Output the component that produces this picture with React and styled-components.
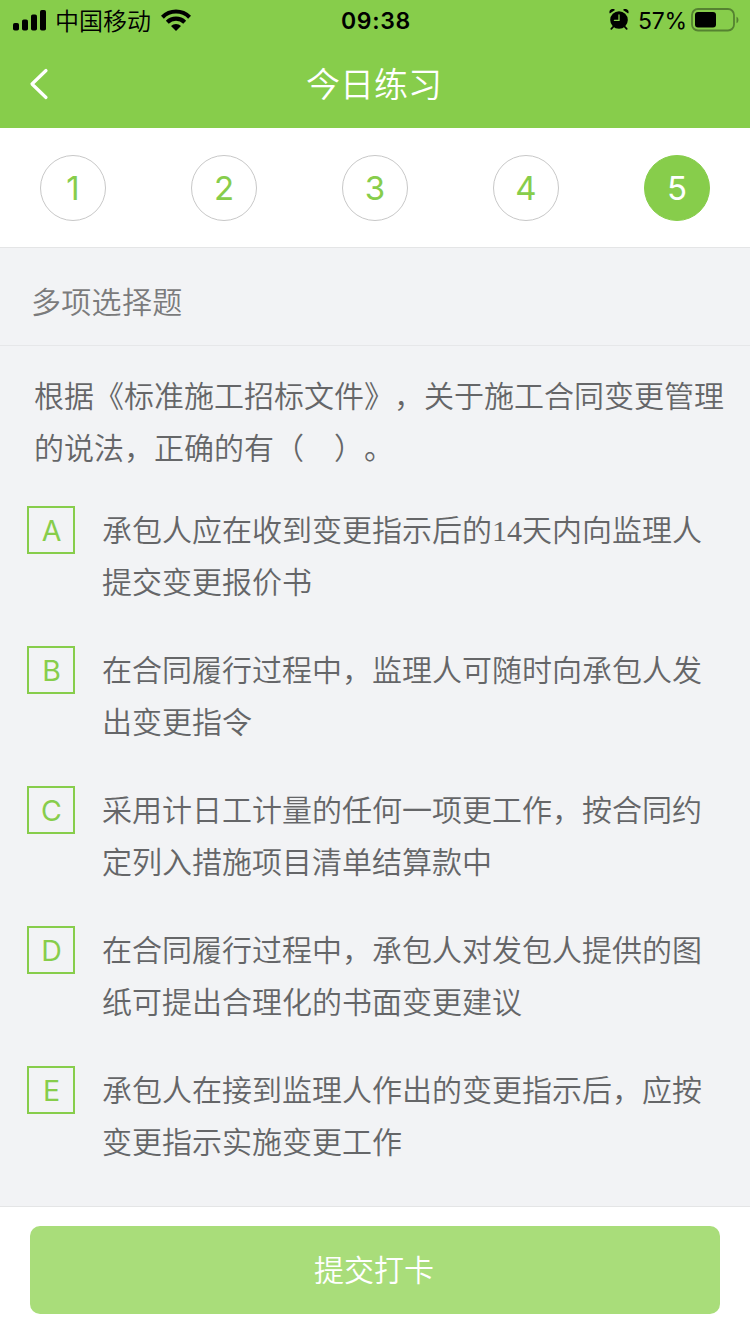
import React from 'react'
import styled, { createGlobalStyle } from 'styled-components'

const GlobalStyle = createGlobalStyle`
  * {
    box-sizing: border-box;
  }

  body {
    margin: 0;
    background: #ffffff;
  }
`;

const Screen = styled.div`
  width: 750px;
  height: 1334px;
  display: flex;
  flex-direction: column;
  overflow: hidden;
  background: #ffffff;
  font-family: Inter, 'Noto Sans CJK SC', sans-serif;
  font-weight: 350;
  text-spacing-trim: space-all;
`;

const Header = styled.header`
  height: 128px;
  flex: none;
  background: #87cd4b;
`;

const StatusBar = styled.div`
  height: 40px;
  display: grid;
  grid-template-columns: 1fr auto 1fr;
  align-items: center;
  padding: 0 11px 0 13px;
  color: #000000;
`;

const StatusGroup = styled.div`
  display: flex;
  align-items: center;
  justify-content: ${({ $end }) => ($end ? 'flex-end' : 'flex-start')};

  svg {
    display: block;
    flex: none;
  }
`;

const Carrier = styled.span`
  margin: 0 10px 0 8px;
  padding-top: 3px;
  font-size: 24px;
  line-height: 37px;
  font-weight: 350;
`;

const Time = styled.span`
  padding-top: 2px;
  font-size: 23px;
  line-height: 38px;
  font-weight: 600;
  letter-spacing: 0.7px;
`;

const Percent = styled.span`
  margin: 0 4px 0 9px;
  padding-top: 2px;
  font-size: 23px;
  line-height: 38px;
  font-weight: 400;
  letter-spacing: -0.2px;
`;

const NavBar = styled.div`
  height: 88px;
  display: grid;
  grid-template-columns: 100px 1fr 100px;
  align-items: center;
`;

const BackButton = styled.button`
  height: 88px;
  margin: 0;
  padding: 0 0 0 29px;
  display: flex;
  align-items: center;
  border: 0;
  background: none;
`;

const Title = styled.h1`
  margin: 0;
  padding: 1px 2px 0 0;
  font-size: 34px;
  line-height: 87px;
  font-weight: 350;
  text-align: center;
  color: #ffffff;
`;

const Steps = styled.nav`
  height: 120px;
  flex: none;
  display: flex;
  justify-content: space-between;
  padding: 27px 40px 0;
  border-bottom: 1px solid #e4e5e6;
`;

const Step = styled.div`
  width: 66px;
  height: 66px;
  display: flex;
  justify-content: center;
  align-items: center;
  border: 1px solid ${({ $active }) => ($active ? '#87cd4b' : '#c8c8c8')};
  border-radius: 50%;
  background: ${({ $active }) => ($active ? '#87cd4b' : '#ffffff')};
  color: ${({ $active }) => ($active ? '#ffffff' : '#87cd4b')};
  font-size: 33px;
  line-height: 64px;
  font-weight: 400;
`;

const Content = styled.main`
  flex: 1;
  background: #f2f3f5;
`;

const QuestionType = styled.h2`
  height: 98px;
  margin: 0;
  padding: 7px 31px 0;
  border-bottom: 1px solid #e6e7e9;
  font-size: 30px;
  line-height: 94px;
  font-weight: 350;
  letter-spacing: 0.3px;
  color: #7b7b7c;
`;

const Question = styled.p`
  margin: 0;
  padding: 24px 24px 0 34px;
  font-size: 30px;
  line-height: 52px;
  color: #656668;
`;

const Options = styled.div`
  display: flex;
  flex-direction: column;
  gap: 34px;
  padding: 32px 27px 0;
`;

const Option = styled.div`
  display: flex;
  align-items: flex-start;
  gap: 27px;
`;

const OptionKey = styled.span`
  width: 48px;
  height: 48px;
  flex: none;
  padding: 2px 0 0 1px;
  display: flex;
  justify-content: center;
  align-items: center;
  border: 2px solid #87cd4b;
  font-size: 28.5px;
  line-height: 42px;
  font-weight: 400;
  color: #87cd4b;
`;

const OptionText = styled.span`
  width: 602px;
  margin-top: -1px;
  padding-bottom: 3px;
  font-family: 'Liberation Serif', 'Noto Sans CJK SC', serif;
  font-size: 30px;
  line-height: 52px;
  color: #656668;
`;

const Footer = styled.footer`
  height: 128px;
  flex: none;
  padding: 19px 30px 0;
  border-top: 1px solid #e4e5e6;
  background: #ffffff;
`;

const SubmitButton = styled.button`
  width: 100%;
  height: 88px;
  margin: 0;
  padding: 1px 2px 0 0;
  display: block;
  border: 0;
  border-radius: 10px;
  background: #a9dd7a;
  font-family: inherit;
  font-size: 30px;
  line-height: 87px;
  font-weight: 350;
  color: #ffffff;
`;

const SignalIcon = () => (
  <svg width="34" height="22" viewBox="0 0 34 22">
    <rect x="0" y="14" width="6" height="7.5" rx="1.8" />
    <rect x="9" y="10.5" width="6" height="11" rx="1.8" />
    <rect x="18" y="5.5" width="6" height="16" rx="1.8" />
    <rect x="27" y="1" width="6" height="20.5" rx="1.8" />
  </svg>
)

const WifiIcon = () => (
  <svg width="30" height="22" viewBox="0 0 30 22">
    <g fill="none" stroke="#000000" strokeWidth="4.1">
      <path d="M1.4 8.2a19.2 19.2 0 0 1 27.2 0" />
      <path d="M6.3 13.2a12.3 12.3 0 0 1 17.4 0" />
    </g>
    <path d="M15 22l-5-5a7.1 7.1 0 0 1 10 0z" />
  </svg>
)

const AlarmIcon = () => (
  <svg width="20" height="22" viewBox="0 0 20 22">
    <circle cx="10" cy="11" r="8.8" />
    <path d="M.8 4.6A3.2 3.2 0 0 1 6 1zM19.2 4.6A3.2 3.2 0 0 0 14 1z" />
    <path d="M4.5 17.5l-2.2 2.4M15.5 17.5l2.2 2.4" stroke="#000000" strokeWidth="1.8" strokeLinecap="round" />
    <path d="M10 6v5.3H5.4" fill="none" stroke="#87cd4b" strokeWidth="1.3" strokeLinecap="round" />
  </svg>
)

const BatteryIcon = () => (
  <svg width="48" height="24" viewBox="0 0 48 24">
    <rect x="1" y="1" width="42" height="21.5" rx="6" fill="none" stroke="#558231" strokeWidth="1.8" />
    <rect x="4" y="4" width="21" height="15.5" rx="3" />
    <path d="M45.5 8.8c2.6 1 2.6 5.4 0 6.4z" fill="#558231" />
  </svg>
)

const BackIcon = () => (
  <svg width="20" height="32" viewBox="0 0 20 32">
    <path d="M17 2.5L3 16l14 13.5" fill="none" stroke="#ffffff" strokeWidth="3.2" strokeLinecap="round" strokeLinejoin="round" />
  </svg>
)

const steps = [1, 2, 3, 4, 5]

const options = [
  { key: 'A', text: '承包人应在收到变更指示后的14天内向监理人提交变更报价书' },
  { key: 'B', text: '在合同履行过程中，监理人可随时向承包人发出变更指令' },
  { key: 'C', text: '采用计日工计量的任何一项更工作，按合同约定列入措施项目清单结算款中' },
  { key: 'D', text: '在合同履行过程中，承包人对发包人提供的图纸可提出合理化的书面变更建议' },
  { key: 'E', text: '承包人在接到监理人作出的变更指示后，应按变更指示实施变更工作' },
]

const App = () => (
  <Screen lang="zh-CN">
    <GlobalStyle />
    <Header>
      <StatusBar>
        <StatusGroup>
          <SignalIcon />
          <Carrier>中国移动</Carrier>
          <WifiIcon />
        </StatusGroup>
        <Time>09:38</Time>
        <StatusGroup $end>
          <AlarmIcon />
          <Percent>57%</Percent>
          <BatteryIcon />
        </StatusGroup>
      </StatusBar>
      <NavBar>
        <BackButton aria-label="返回">
          <BackIcon />
        </BackButton>
        <Title>今日练习</Title>
      </NavBar>
    </Header>
    <Steps>
      {steps.map(step => (
        <Step key={step} $active={step === 5}>{step}</Step>
      ))}
    </Steps>
    <Content>
      <QuestionType>多项选择题</QuestionType>
      <Question>根据《标准施工招标文件》，关于施工合同变更管理的说法，正确的有（　）。</Question>
      <Options>
        {options.map(({ key, text }) => (
          <Option key={key}>
            <OptionKey>{key}</OptionKey>
            <OptionText>{text}</OptionText>
          </Option>
        ))}
      </Options>
    </Content>
    <Footer>
      <SubmitButton>提交打卡</SubmitButton>
    </Footer>
  </Screen>
)

export default App
